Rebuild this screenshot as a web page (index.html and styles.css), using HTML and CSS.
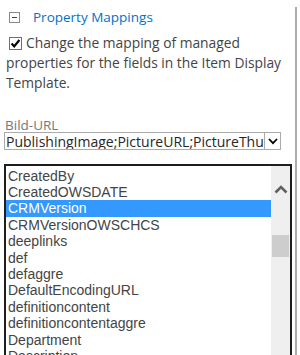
FILE: index.html
```html
<!DOCTYPE html>
<html lang="en">
<head>
    <meta charset="UTF-8">
    <meta name="viewport" content="width=device-width, initial-scale=1.0">
    <title>Property Mappings</title>
    <link rel="stylesheet" href="styles.css">
</head>
<body>
<div class="panel">

    <!-- Gruppe -->
    <div class="group-head">
        <span class="toggle"><span class="toggle-bar"></span></span>
        <a class="group-title" href="#">Property Mappings</a>
    </div>

    <p class="note">
        <span class="chk">
            <svg width="13" height="13" viewBox="0 0 13 13">
                <rect x="0.5" y="0.5" width="12" height="12" fill="#fff" stroke="#707070"/>
                <path d="M2.6 6.6 L5.2 9.4 L10.4 3" fill="none" stroke="#000" stroke-width="2.2"/>
            </svg>
        </span>Change the mapping of managed properties for the fields in the Item Display Template.
    </p>

    <!-- Feld -->
    <label class="field-label">Bild-URL</label>
    <div class="combo">
        <input class="combo-input" type="text" value="PublishingImage;PictureURL;PictureThumbnailURL">
        <span class="combo-btn">
            <svg width="10" height="7" viewBox="0 0 10 7">
                <path d="M1 1 L5 5.2 L9 1" fill="none" stroke="#000" stroke-width="1.8"/>
            </svg>
        </span>
    </div>

    <!-- Liste -->
    <div class="listbox">
        <ul class="options">
            <li>CreatedBy</li>
            <li>CreatedOWSDATE</li>
            <li class="selected">CRMVersion</li>
            <li>CRMVersionOWSCHCS</li>
            <li>deeplinks</li>
            <li>def</li>
            <li>defaggre</li>
            <li>DefaultEncodingURL</li>
            <li>definitioncontent</li>
            <li>definitioncontentaggre</li>
            <li>Department</li>
            <li>Description</li>
            <li>DisplayAuthor</li>
        </ul>
        <div class="scrollbar">
            <svg class="sb-up" width="14" height="9" viewBox="0 0 14 9">
                <path d="M1.5 7.5 L7 2 L12.5 7.5" fill="none" stroke="#606060" stroke-width="2.6"/>
            </svg>
            <div class="sb-thumb"></div>
        </div>
    </div>

</div>
</body>
</html>
```

FILE: styles.css
```css
/* Reset */
* {
    margin: 0;
    padding: 0;
    box-sizing: border-box;
}

body {
    background: #fff;
    overflow: hidden;
    font-family: "Open Sans", "Noto Sans", sans-serif;
}

/* Panel mit Rand rechts */
.panel {
    width: 297px;
    height: 100vh;
    border-right: 2px solid #ababab;
}

/* Gruppenkopf */
.group-head {
    display: flex;
    align-items: center;
    height: 20px;
    margin-top: 7px;
    padding-left: 9px;
}

.toggle {
    display: flex;
    align-items: center;
    justify-content: center;
    width: 11px;
    height: 11px;
    border: 1px solid #8a8a8a;
    background: #fff;
}

.toggle-bar {
    width: 5px;
    height: 1px;
    background: #444;
}

.group-title {
    margin-left: 13px;
    font-size: 13.5px;
    color: #0072c6;
    text-decoration: none;
}

/* Hinweis mit Checkbox */
.note {
    margin-top: 6px;
    padding-left: 6px;
    padding-right: 8px;
    font-size: 13.8px;
    line-height: 20px;
    color: #444;
}

.chk {
    display: inline-block;
    vertical-align: -2px;
    margin-left: 3px;
    margin-right: 4px;
    line-height: 0;
}

/* Feld */
.field-label {
    display: block;
    margin-top: 25px;
    padding-left: 5px;
    font-size: 13.5px;
    line-height: 14px;
    color: #777;
}

.combo {
    display: flex;
    margin-left: 4px;
    height: 18px;
}

.combo-input {
    width: 261px;
    height: 18px;
    border: 1px solid #ababab;
    padding: 0 1px;
    font-family: "Open Sans", "Noto Sans", sans-serif;
    font-size: 14px;
    color: #262626;
    outline: none;
}

.combo-btn {
    display: flex;
    align-items: center;
    justify-content: center;
    width: 17px;
    height: 18px;
    margin-left: -1px;
    border: 1px solid #ababab;
    background: #fff;
}

/* Listbox */
.listbox {
    display: flex;
    width: 288px;
    height: 240px;
    margin-top: 14px;
    margin-left: 4px;
    border: 2px solid #1e1e1e;
}

.options {
    flex: 1;
    list-style: none;
    padding-top: 1.7px;
    font-family: "Liberation Sans", Arial, sans-serif;
    font-size: 14px;
    color: #444;
}

.options li {
    height: 16.4px;
    line-height: 16.4px;
    padding-left: 2px;
    white-space: nowrap;
}

.options li.selected {
    background: #3399ff;
    color: #fff;
}

.scrollbar {
    display: flex;
    flex-direction: column;
    align-items: center;
    width: 19px;
    background: #efefef;
}

.sb-up {
    margin-top: 19px;
}

.sb-thumb {
    width: 17px;
    height: 22px;
    margin-top: 41px;
    background: #cdcdcd;
}
```
